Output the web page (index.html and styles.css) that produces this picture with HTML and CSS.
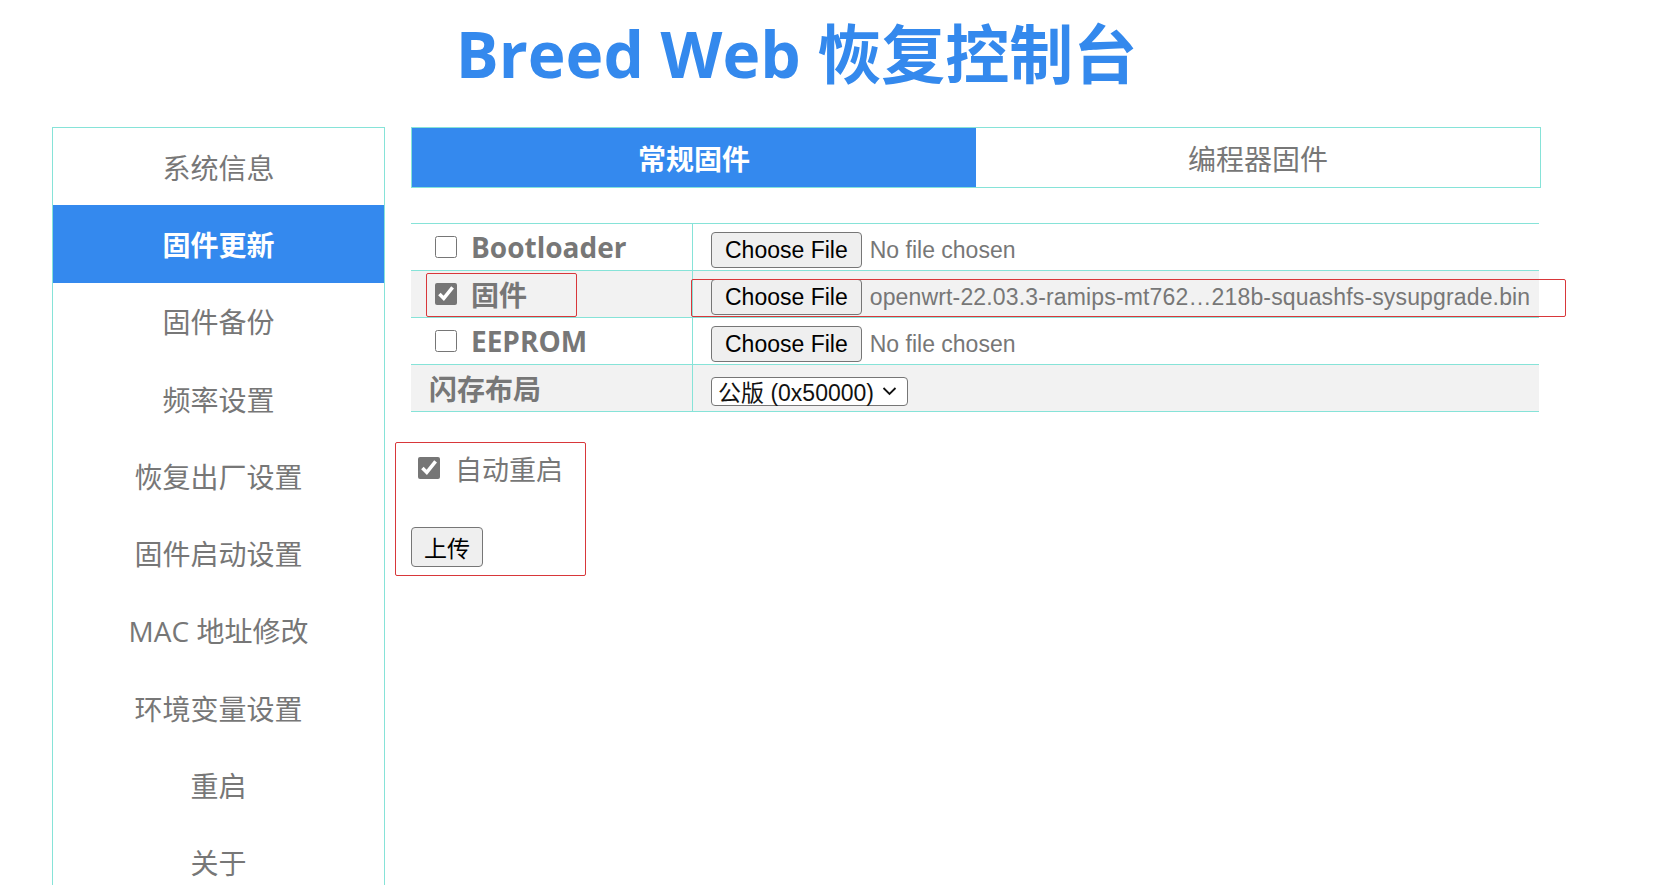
FILE: index.html
```html
<!DOCTYPE html>
<html lang="zh-CN">
<head>
<meta charset="utf-8">
<title>Breed Web 恢复控制台</title>
<link rel="stylesheet" href="styles.css">
</head>
<body>
<div class="page">
  <h1 class="title">Breed Web 恢复控制台</h1>
  <div class="layout">
    <nav class="sidebar">
      <a class="nav-item">系统信息</a>
      <a class="nav-item active">固件更新</a>
      <a class="nav-item">固件备份</a>
      <a class="nav-item">频率设置</a>
      <a class="nav-item">恢复出厂设置</a>
      <a class="nav-item">固件启动设置</a>
      <a class="nav-item">MAC 地址修改</a>
      <a class="nav-item">环境变量设置</a>
      <a class="nav-item">重启</a>
      <a class="nav-item">关于</a>
    </nav>
    <main class="main">
      <div class="tabs">
        <div class="tab active">常规固件</div>
        <div class="tab">编程器固件</div>
      </div>
      <div class="fw-table">
        <div class="cell label-cell"><input class="check" type="checkbox"><span class="label-text">Bootloader</span></div>
        <div class="cell file-cell"><span class="file-btn">Choose File</span><span class="file-name">No file chosen</span></div>

        <div class="cell label-cell alt"><input class="check" type="checkbox" checked><span class="label-text">固件</span></div>
        <div class="cell file-cell alt"><span class="file-btn">Choose File</span><span class="file-name long">openwrt-22.03.3-ramips-mt762…218b-squashfs-sysupgrade.bin</span></div>

        <div class="cell label-cell"><input class="check" type="checkbox"><span class="label-text">EEPROM</span></div>
        <div class="cell file-cell"><span class="file-btn">Choose File</span><span class="file-name">No file chosen</span></div>

        <div class="cell label-cell alt plain"><span class="label-text">闪存布局</span></div>
        <div class="cell file-cell alt"><div class="select"><span>公版 (0x50000)</span><svg class="chev" width="15" height="10" viewBox="0 0 15 10"><path d="M1.5 2 L7.5 8 L13.5 2" fill="none" stroke="#111" stroke-width="1.8"/></svg></div></div>
      </div>
      <div class="reboot">
        <label class="reboot-row"><input class="check" type="checkbox" checked><span class="reboot-text">自动重启</span></label>
        <button class="upload" type="button">上传</button>
      </div>
      <div class="mark mark-fw"></div>
      <div class="mark mark-file"></div>
      <div class="mark mark-reboot"></div>
    </main>
  </div>
</div>
</body>
</html>
```
FILE: styles.css
```css
html, body {
  margin: 0;
  padding: 0;
  overflow: hidden;
  background: #fff;
}
body {
  font-family: "Open Sans", "Noto Sans CJK SC", sans-serif;
  color: #777;
}
.page {
  width: 1489px;
  margin-left: 52px;
}
.title {
  box-sizing: border-box;
  height: 127px;
  margin: 0;
  padding-top: 12px;
  font-size: 64px;
  line-height: 83px;
  font-weight: 700;
  color: #3489ed;
  text-align: center;
  white-space: nowrap;
}
.layout {
  display: flex;
  gap: 26px;
  align-items: flex-start;
}
.sidebar {
  box-sizing: border-box;
  width: 333px;
  flex: none;
  border: 1px solid #86e3d8;
  display: flex;
  flex-direction: column;
}
.nav-item {
  height: 77.3px;
  display: flex;
  align-items: center;
  justify-content: center;
  font-size: 28px;
  color: #777;
  text-decoration: none;
  white-space: nowrap;
}
.nav-item.active {
  background: #3489ee;
  color: #fff;
  font-weight: 700;
}
.main {
  position: relative;
  width: 1130px;
  flex: none;
}
.tabs {
  box-sizing: border-box;
  display: flex;
  height: 61px;
  border: 1px solid #86e3d8;
}
.tab {
  flex: 1;
  display: flex;
  align-items: center;
  justify-content: center;
  font-size: 28px;
  color: #777;
}
.tab.active {
  background: #3489ee;
  color: #fff;
  font-weight: 700;
}
.fw-table {
  margin-top: 35px;
  width: 1128px;
  display: grid;
  grid-template-columns: 281px 1fr;
  border-top: 1px solid #86e3d8;
}
.cell {
  box-sizing: border-box;
  height: 47px;
  border-bottom: 1px solid #86e3d8;
  display: flex;
  align-items: center;
}
.cell.alt {
  background: #f2f2f2;
}
.label-cell {
  padding-left: 18px;
  gap: 14px;
}
.check {
  width: 22px;
  height: 22px;
  margin: 0 0 0 6px;
  accent-color: #767676;
  flex: none;
}
.label-text {
  font-size: 28px;
  font-weight: 700;
  color: #777;
  white-space: nowrap;
}
.file-cell {
  border-left: 1px solid #86e3d8;
  padding-left: 18px;
  padding-top: 6px;
  gap: 8px;
}
.file-btn {
  box-sizing: border-box;
  height: 36px;
  padding: 0 13px;
  display: inline-flex;
  align-items: center;
  background: #efefef;
  border: 1px solid #767676;
  border-radius: 4px;
  font-family: "Liberation Sans", Arial, sans-serif;
  font-size: 23px;
  color: #000;
  white-space: nowrap;
}
.file-name {
  font-family: "Liberation Sans", Arial, sans-serif;
  font-size: 23px;
  color: #777;
  white-space: nowrap;
}
.file-name.long {
  letter-spacing: 0.15px;
}
.select {
  box-sizing: border-box;
  height: 29px;
  padding: 0 10px 0 6px;
  display: inline-flex;
  align-items: center;
  gap: 8px;
  background: #fff;
  border: 1px solid #767676;
  border-radius: 4px;
  font-family: "Liberation Sans", "Noto Sans CJK SC", sans-serif;
  font-size: 23px;
  color: #111;
  white-space: nowrap;
}
.chev {
  flex: none;
}
.reboot {
  display: flex;
  flex-direction: column;
  align-items: flex-start;
  padding-top: 39px;
}
.reboot-row {
  display: flex;
  align-items: center;
  gap: 15px;
  height: 34px;
}
.reboot-row .check {
  margin-left: 7px;
}
.reboot-text {
  font-size: 27px;
  color: #777;
}
.upload {
  margin-top: 42px;
  box-sizing: border-box;
  height: 40px;
  padding: 0 12px;
  background: #efefef;
  border: 1px solid #767676;
  border-radius: 4px;
  font-family: "Liberation Sans", "Noto Sans CJK SC", sans-serif;
  font-size: 23px;
  color: #000;
}
.mark {
  position: absolute;
  box-sizing: border-box;
  border: 1px solid #d8373a;
  border-radius: 2px;
  pointer-events: none;
}
.mark-fw {
  left: 15px;
  top: 146px;
  width: 151px;
  height: 44px;
}
.mark-file {
  left: 280px;
  top: 152px;
  width: 875px;
  height: 38px;
}
.mark-reboot {
  left: -16px;
  top: 315px;
  width: 191px;
  height: 134px;
}
```
